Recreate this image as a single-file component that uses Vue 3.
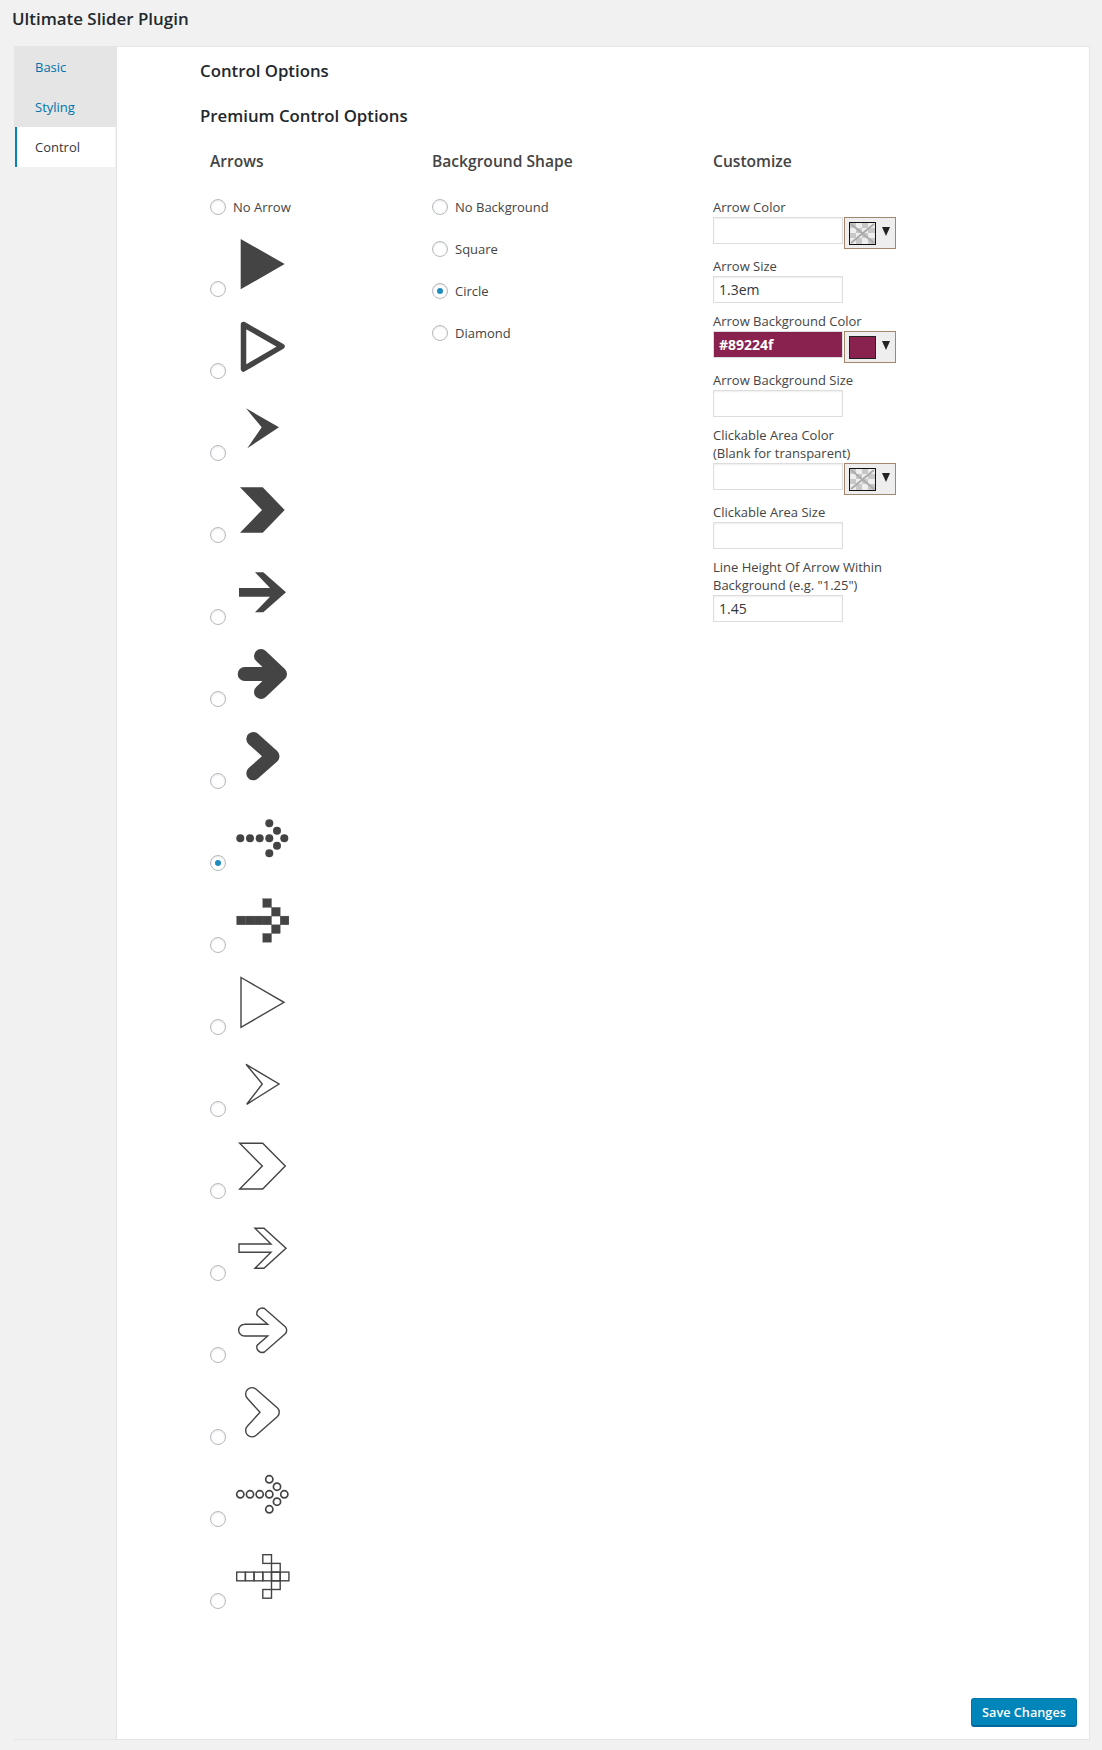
<script setup>
const dots = [[4.3,29.3],[14,29.3],[23.7,29.3],[33.3,29.3],[48.3,29.3],[41,21.7],[41,36.7],[33.3,14.3],[33.3,44.3]]
const cells = [[0.7,25.1],[9.4,25.1],[18.1,25.1],[26.8,25.1],[35.5,25.1],[44.2,25.1],[26.8,7.7],[35.5,16.4],[35.5,33.8],[26.8,42.5]]
const solidCells = [[0.7,25.1],[9.4,25.1],[18.1,25.1],[26.8,25.1],[44.2,25.1],[26.8,7.7],[35.5,16.4],[35.5,33.8],[26.8,42.5]]

const arrows = [
  { cls: 'solid', paths: ['M4.7 4L48.7 29L4.7 54.3Z'] },
  { cls: 'thick', paths: ['M7.5 7.5L46 29.5L7.5 52Z'] },
  { cls: 'solid', paths: ['M10 9.3L43 28.3L11.3 49.3L25.7 28.3Z'] },
  { cls: 'solid', paths: ['M4 6.3H26.7L48.7 29L26.7 51.7H4L26 29Z'] },
  { cls: 'solid', paths: ['M19 9.3H27.3L50 29.3L27.3 49.3H19L34 33.7H3V25H34Z'] },
  { cls: 'round', paths: ['M8.7 29H40', 'M25 11L44 29L25 47'] },
  { cls: 'round', paths: ['M17.3 12L36.5 29.3L17.3 46.3'] },
  { cls: 'solid', circles: dots, r: 4 },
  { cls: 'solid', rects: solidCells },
  { cls: 'line', paths: ['M5 4.5L48 29.3L5 54.3Z'] },
  { cls: 'line', paths: ['M10 9.3L43 29L10.7 49.3L26.3 29Z'] },
  { cls: 'line', paths: ['M3.7 6.3H26.7L49.3 29L26.7 52H3.7L26.3 29Z'] },
  { cls: 'line', paths: ['M19 9.3H28L50 29.3L28 49.3H19L35 33.3H3V25H35Z'] },
  { cls: 'line', paths: ['M8 23.3H31.7L21 14A5.5 5.5 0 0 1 28.5 7.5L49 25.5A5 5 0 0 1 49 33L28.5 51A5.5 5.5 0 0 1 21 44.5L31.7 35H8.5A5.8 5.8 0 0 1 8.5 23.3Z'] },
  { cls: 'line', paths: ['M24 29.3L11.5 15.5A6.3 6.3 0 0 1 20.5 6.5L41.5 25A6 6 0 0 1 41.5 33.5L20.5 52A6.3 6.3 0 0 1 11.5 43Z'] },
  { cls: 'ring', circles: dots, r: 3.6 },
  { cls: 'line', rects: cells },
]
const shapes = [
  { label: 'No Background', on: false },
  { label: 'Square', on: false },
  { label: 'Circle', on: true },
  { label: 'Diamond', on: false },
]
const fields = [
  { label: ['Arrow Color'], color: 'none' },
  { label: ['Arrow Size'], value: '1.3em' },
  { label: ['Arrow Background Color'], color: 'set', value: '#89224f' },
  { label: ['Arrow Background Size'] },
  { label: ['Clickable Area Color', '(Blank for transparent)'], color: 'none' },
  { label: ['Clickable Area Size'] },
  { label: ['Line Height Of Arrow Within', 'Background (e.g. "1.25")'], value: '1.45' },
]
</script>

<template>
  <div class="page">
    <h1 class="title">Ultimate Slider Plugin</h1>
    <div class="panel">
      <nav class="tabs">
        <a class="tab">Basic</a>
        <a class="tab">Styling</a>
        <a class="tab active">Control</a>
      </nav>
      <main class="main">
        <h2 class="heading">Control Options</h2>
        <h2 class="heading second">Premium Control Options</h2>
        <div class="columns">
          <section class="col-arrows">
            <h3 class="sub">Arrows</h3>
            <label class="opt"><input class="radio" type="radio" name="arrow" /><span>No Arrow</span></label>
            <label v-for="(a, i) in arrows" :key="i" class="arrow-row">
              <input class="radio" type="radio" name="arrow" :checked="i === 7" />
              <svg class="arrow" :class="a.cls" width="60" height="60" viewBox="0 0 60 60">
                <path v-for="d in a.paths" :key="d" :d="d" />
                <circle v-for="c in a.circles" :key="c.join()" :cx="c[0]" :cy="c[1]" :r="a.r" />
                <rect v-for="c in a.rects" :key="c.join()" :x="c[0]" :y="c[1]" width="8.7" height="8.7" />
              </svg>
            </label>
          </section>
          <section class="col-shape">
            <h3 class="sub">Background Shape</h3>
            <div class="shape-list">
              <label v-for="s in shapes" :key="s.label" class="opt">
                <input class="radio" type="radio" name="shape" :checked="s.on" /><span>{{ s.label }}</span>
              </label>
            </div>
          </section>
          <section class="col-custom">
            <h3 class="sub">Customize</h3>
            <div class="fields">
              <div v-for="f in fields" :key="f.label[0]" class="field">
                <label class="field-label"><span v-for="l in f.label" :key="l">{{ l }}</span></label>
                <div class="field-row">
                  <input class="text" :class="{ filled: f.color === 'set' }" type="text" :value="f.value || ''" />
                  <button v-if="f.color" class="picker" type="button">
                    <span v-if="f.color === 'set'" class="swatch set"></span>
                    <svg v-else class="swatch" width="27" height="23" viewBox="0 0 25 21">
                      <rect width="25" height="21" fill="#eee" />
                      <path d="M0 0h6v5H0zM12 0h6v5h-6zM6 5h6v5H6zM18 5h7v5h-7zM0 10h6v5H0zM12 10h6v5h-6zM6 15h6v6H6zM18 15h7v6h-7z" fill="#c8c8c8" />
                      <path d="M1 1L24 20M24 1L1 20" stroke="#ababab" stroke-width="2" fill="none" />
                    </svg>
                    <span class="caret"></span>
                  </button>
                </div>
              </div>
            </div>
          </section>
        </div>
        <div class="footer">
          <button class="save" type="button">Save Changes</button>
        </div>
      </main>
    </div>
  </div>
</template>

<style>
html, body { background: #f1f1f1; }
</style>

<style scoped>
.page {
  height: 1750px;
  box-sizing: border-box;
  padding: 8px 12px 0 13px;
  font-family: "Open Sans", sans-serif;
  font-size: 13px;
  color: #444;
  overflow: hidden;
}
.title {
  margin: 0 0 16px -1px;
  font-size: 16.9px;
  line-height: 22px;
  font-weight: 600;
  color: #23282d;
}
.panel {
  display: flex;
  height: 1694px;
  box-sizing: border-box;
  border: 1px solid #e5e5e5;
  border-left: 0;
  margin-left: 1px;
}
.tabs {
  width: 102px;
  flex: none;
  display: flex;
  flex-direction: column;
}
.tab {
  height: 40px;
  box-sizing: border-box;
  padding-left: 21px;
  line-height: 40px;
  background: #e5e5e5;
  color: #0073aa;
}
.tab.active {
  margin: 0 1px;
  padding-left: 18px;
  border-left: 2px solid #0085ba;
  background: #fff;
  color: #32373c;
}
.main {
  flex: 1;
  display: flex;
  flex-direction: column;
  background: #fff;
  border-left: 1px solid #e5e5e5;
  padding: 13px 12px 12px 83px;
}
.heading {
  margin: 0;
  font-size: 16.8px;
  line-height: 22px;
  font-weight: 600;
  color: #23282d;
}
.heading.second { margin-top: 23px; }
.columns {
  display: flex;
  margin-top: 23px;
  padding-left: 10px;
  flex: 1;
}
.sub {
  margin: 0 0 27px;
  font-size: 15.6px;
  line-height: 22px;
  font-weight: 600;
  color: #444;
}
.col-arrows { width: 222px; flex: none; }
.col-shape { width: 281px; flex: none; }
.col-custom { flex: 1; }
.opt {
  display: flex;
  align-items: center;
  gap: 7px;
  height: 16px;
  line-height: 16px;
}
.shape-list {
  display: flex;
  flex-direction: column;
  gap: 26px;
}
.arrow-row {
  display: flex;
  align-items: flex-end;
  height: 82px;
}
.radio {
  appearance: none;
  flex: none;
  width: 16px;
  height: 16px;
  margin: 0;
  display: flex;
  align-items: center;
  justify-content: center;
  box-sizing: border-box;
  border: 1px solid #b4b9be;
  border-radius: 50%;
  background: #fff;
  box-shadow: inset 0 1px 2px rgba(0, 0, 0, 0.1);
}
.radio:checked::before {
  content: "";
  width: 6px;
  height: 6px;
  border-radius: 50%;
  background: #1e8cbe;
}
.arrow {
  margin: 0 0 2px 10px;
  display: block;
  overflow: visible;
}
.arrow.solid { fill: #444; }
.arrow.solid rect { stroke: #444; stroke-width: 0.3; }
.arrow.thick { fill: none; stroke: #444; stroke-width: 5.5; stroke-linejoin: round; }
.arrow.round { fill: none; stroke: #444; stroke-width: 14; stroke-linecap: round; stroke-linejoin: round; }
.arrow.line { fill: none; stroke: #444; stroke-width: 1.4; }
.arrow.ring { fill: none; stroke: #444; stroke-width: 1.7; }
.fields { margin-top: -1px; }
.field-label {
  display: flex;
  flex-direction: column;
  line-height: 18px;
  margin-bottom: 1px;
}
.field-row {
  display: flex;
  align-items: flex-start;
  height: 36px;
}
.field-row:has(.picker) { height: 40px; }
.text {
  width: 130px;
  height: 27px;
  box-sizing: border-box;
  margin: 0;
  padding: 0 5px;
  border: 1px solid #ddd;
  box-shadow: inset 0 1px 2px rgba(0, 0, 0, 0.07);
  background: #fff;
  font-family: "Open Sans", sans-serif;
  font-size: 14px;
  color: #32373c;
  outline: none;
}
.text.filled {
  background: #89224f;
  color: #fff;
  font-weight: 700;
}
.picker {
  width: 52px;
  height: 32px;
  box-sizing: border-box;
  margin: 0 0 0 1px;
  padding: 0 0 0 4px;
  display: flex;
  align-items: flex-start;
  border: 1px solid #a5866a;
  background: #eee;
}
.swatch {
  flex: none;
  display: block;
  width: 27px;
  height: 23px;
  margin-top: 4px;
  box-sizing: border-box;
  border: 1px solid #111;
}
.swatch.set { background: #89224f; border-color: #222; }
.caret {
  margin: 9px 0 0 6px;
  width: 0;
  height: 0;
  border-left: 4.5px solid transparent;
  border-right: 4.5px solid transparent;
  border-top: 9px solid #222;
}
.footer {
  display: flex;
  justify-content: flex-end;
  margin-top: auto;
}
.save {
  width: 106px;
  height: 29px;
  box-sizing: border-box;
  padding: 0;
  border: 1px solid #0073aa;
  border-bottom: 2px solid #006799;
  border-radius: 3px;
  background: #0085ba;
  color: #fff;
  font-family: "Open Sans", sans-serif;
  font-size: 12.7px;
  font-weight: 600;
}
</style>
